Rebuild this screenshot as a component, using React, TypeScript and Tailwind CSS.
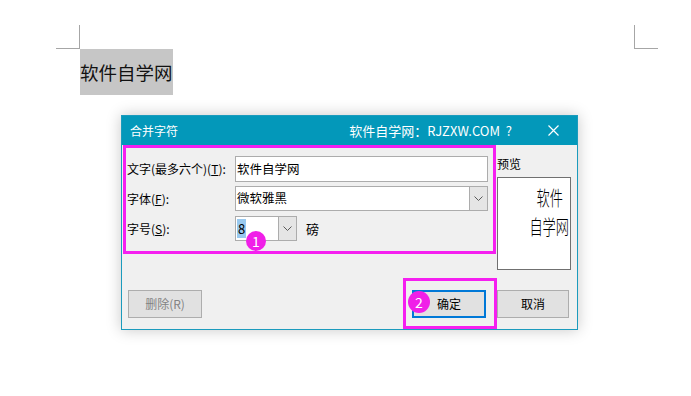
import React from 'react';

function Chevron() {
  return (
    <svg width="9" height="5" viewBox="0 0 9 5" fill="none" aria-hidden="true">
      <path d="M0.5 0.5 L4.5 4.5 L8.5 0.5" stroke="#5a5a5a" strokeWidth="1" />
    </svg>
  );
}

function Badge({ n, className }: { n: string; className: string }) {
  return (
    <div
      className={`absolute rounded-full bg-[#f01fe8] text-white flex items-center justify-center text-[14px] leading-none ${className}`}
    >
      {n}
    </div>
  );
}

export default function App() {
  return (
    <div className="w-[691px] h-[396px] bg-white overflow-hidden text-black font-['Noto_Sans_CJK_SC',sans-serif]">
      {/* page corner marks */}
      <div className="flex justify-between pt-[25px] pl-[56px] pr-[33px]">
        <div className="w-[24px] h-[24px] border-r border-b border-[#a6a6a6]" />
        <div className="w-[24px] h-[24px] border-l border-b border-[#a6a6a6]" />
      </div>

      {/* selected text in document */}
      <div className="ml-[80px] w-[93px] h-[46px] bg-[#c6c6c6] flex items-center text-[18.5px] leading-none text-[#111]">
        软件自学网
      </div>

      {/* dialog */}
      <div className="ml-[121px] mt-[20px] w-[457px] border border-[#1b9bbd] bg-[#f0f0f0] shadow-[0_0_14px_rgba(0,0,0,0.22)]">
        {/* title bar */}
        <div className="h-[29px] bg-[#0398ba] flex items-center text-white pl-[8px] pr-[18px]">
          <span className="text-[12px] leading-none">合并字符</span>
          <span className="ml-auto text-[13px] leading-none">软件自学网：RJZXW.COM&nbsp;&nbsp;?</span>
          <svg className="ml-[36px]" width="11" height="11" viewBox="0 0 11 11" aria-hidden="true">
            <path d="M0.5 0.5 L10.5 10.5 M10.5 0.5 L0.5 10.5" stroke="#ffffff" strokeWidth="1.2" />
          </svg>
        </div>

        {/* body */}
        <div className="text-[12px] leading-none">
          <div className="flex items-start pl-[1px]">
            {/* annotated form box */}
            <div className="relative w-[373px] h-[109px] border-[3px] border-[#f51ff0] pt-[8px] flex flex-col">
              <div className="flex items-center h-[26px]">
                <div className="w-[109px] pl-[1px]">
                  文字(最多六个)(<span className="underline">T</span>):
                </div>
                <div className="w-[253px] h-[26px] border border-[#acacac] bg-white flex items-center pl-[1px] text-[12.5px]">
                  软件自学网
                </div>
              </div>
              <div className="flex items-center h-[25px] mt-[4px]">
                <div className="w-[109px] pl-[1px]">
                  字体(<span className="underline">F</span>):
                </div>
                <div className="w-[253px] h-[25px] border border-[#acacac] bg-white flex items-center">
                  <span className="pl-[1px] flex-1 text-[12.5px]">微软雅黑</span>
                  <div className="w-[18px] h-full bg-[#e5e5e5] border-l border-[#acacac] flex items-center justify-center">
                    <Chevron />
                  </div>
                </div>
              </div>
              <div className="flex items-center h-[25px] mt-[5px]">
                <div className="w-[109px] pl-[1px]">
                  字号(<span className="underline">S</span>):
                </div>
                <div className="w-[62px] h-[25px] border border-[#acacac] bg-white flex items-center">
                  <div className="flex-1 pl-[1px]">
                    <span className="bg-[#99c9ef] inline-flex items-center h-[19px] px-[1px] text-[13px]">8</span>
                  </div>
                  <div className="w-[18px] h-full bg-[#e5e5e5] border-l border-[#acacac] flex items-center justify-center">
                    <Chevron />
                  </div>
                </div>
                <span className="ml-[9px] text-[13px]">磅</span>
              </div>
              <Badge n="1" className="left-[120px] top-[83px] w-[20px] h-[20px]" />
            </div>

            {/* preview */}
            <div className="ml-[1px] w-[74px]">
              <div className="h-[32px] pt-[13px]">预览</div>
              <div className="h-[93px] border border-[#707070] bg-white flex flex-col items-end pt-[5px] pr-[1px] font-light">
                <div className="h-[29px] mr-[6px] flex items-center text-[20px] leading-none scale-x-[0.66] origin-right">软件</div>
                <div className="h-[29px] flex items-center text-[20px] leading-none scale-x-[0.66] origin-right">自学网</div>
              </div>
            </div>
          </div>

          {/* buttons */}
          <div className="flex items-start mt-[8px]">
            <div className="ml-[6px] mt-[12px] w-[74px] h-[28px] bg-[#e1e1e1] border border-[#adadad] flex items-center justify-center text-[#838383]">
              删除(R)
            </div>
            <div className="relative ml-[201px] w-[94px] h-[51px] border-[3px] border-[#f51ff0] pt-[9px] pl-[6px]">
              <div className="w-[74px] h-[28px] bg-[#e1e1e1] border-2 border-[#0078d7] flex items-center justify-center">
                确定
              </div>
              <Badge n="2" className="left-[2px] top-[10px] w-[22px] h-[22px]" />
            </div>
            <div className="mt-[12px] w-[72px] h-[28px] bg-[#e1e1e1] border border-[#adadad] flex items-center justify-center">
              取消
            </div>
          </div>
        </div>
      </div>
    </div>
  );
}
